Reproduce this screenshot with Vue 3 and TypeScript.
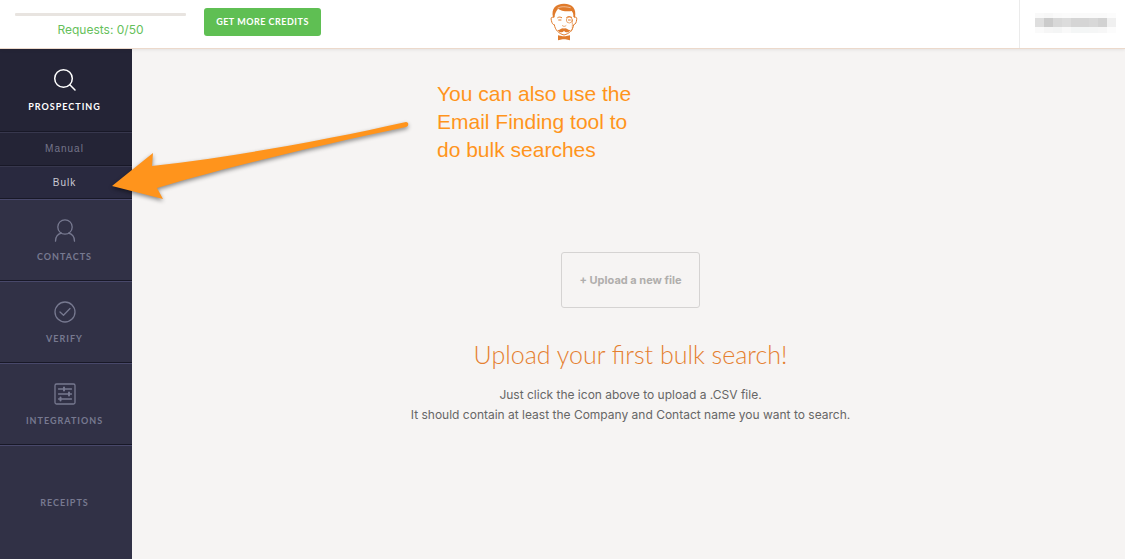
<script setup lang="ts">
interface Cell {
  x: number
  y: number
  w: number
  h: number
  fill: string
}

const shades: string[][] = [
  ['#f9f9f9', '#f7f7f7', '#fafafa', '#fbfbfb', '#fafafa', '#fafafa', '#fafafa', '#fafafa', '#fcfcfc'],
  ['#dedede', '#cbcbcb', '#d8d8d8', '#dcdcdc', '#d5d5d5', '#d5d5d5', '#d8d8d8', '#d2d2d2', '#f0f0f0'],
  ['#fafafa', '#f6f6f6', '#f4f5f5', '#f9f9f9', '#f4f6f6', '#f4f6f6', '#f5f6f6', '#f7f7f7', '#fcfcfc'],
]
const rowTops = [0, 5, 14]
const rowHeights = [5, 9, 6]
const cells: Cell[] = shades.flatMap((row, r) =>
  row.map((fill, c) => ({ x: c * 9, y: rowTops[r], w: 9, h: rowHeights[r], fill })),
)

const used = 0
const total = 50
</script>

<template>
  <div class="page">
    <header class="topbar">
      <div class="quota">
        <div class="track"><div class="fill" :style="{ width: (used / total) * 100 + '%' }"></div></div>
        <span class="quota-text">Requests: {{ used }}/{{ total }}</span>
      </div>
      <button class="credits" type="button">GET MORE CREDITS</button>
      <a class="logo" href="#" aria-label="Home">
        <svg width="28" height="38" viewBox="0 0 84 114" fill="none" stroke="#e07b2c" stroke-width="3" stroke-linecap="round" stroke-linejoin="round">
          <path d="M9 43C3 16 17 3 42 2C67 3 80 16 75 43L70 42C71 34 69 29 65 24C50 27 31 23 24 17C19 25 14 30 14 43Z" fill="#e07b2c" stroke="none" />
          <path d="M24 15C34 9 48 11 61 14" stroke="#fff" stroke-width="1.5" />
          <path d="M10 43C4 41 2 45 4 52C6 61 8 65 13 65C15 80 26 92 42 96C58 92 69 81 71 65C77 64 79 58 80 50C81 43 78 41 74 43" />
          <path d="M23 44C27 41 31 42 35 44M50 43C54 40 60 40 65 43" stroke-width="3" />
          <path d="M26 51H33M55 51H61" stroke-width="3" />
          <circle cx="58" cy="51" r="9" stroke-width="2" />
          <path d="M67 53V78C67 84 62 86 60 83" stroke-width="2" stroke-dasharray="3 3" />
          <path d="M37 68C40 71 45 71 48 68" stroke-width="2" />
          <path d="M42 77C35 73 31 83 23 81C28 91 38 89 42 83C46 89 56 91 61 81C53 83 49 73 42 77Z" fill="#e07b2c" stroke="none" />
          <path d="M24 97L38 100H46L60 97V112L46 109H38L24 112Z" fill="#e07b2c" stroke="none" />
        </svg>
      </a>
      <div class="account">
        <svg width="81" height="20" viewBox="0 0 81 20" shape-rendering="crispEdges" aria-hidden="true">
          <rect v-for="(c, i) in cells" :key="i" :x="c.x" :y="c.y" :width="c.w" :height="c.h" :fill="c.fill" />
        </svg>
      </div>
    </header>

    <div class="body">
      <nav class="sidebar">
        <a class="item current" href="#">
          <svg width="24" height="24" viewBox="0 0 24 24" fill="none" stroke="currentColor" stroke-width="1.5" stroke-linecap="round">
            <circle cx="10.5" cy="10.5" r="8.8" />
            <path d="M16.8 16.8L22 22" />
          </svg>
          <span>PROSPECTING</span>
        </a>
        <a class="sub" href="#">Manual</a>
        <a class="sub active" href="#">Bulk</a>
        <a class="item" href="#">
          <svg width="24" height="24" viewBox="0 0 24 24" fill="none" stroke="currentColor" stroke-width="1.3" stroke-linecap="round">
            <circle cx="12" cy="9" r="7.2" />
            <path d="M2.5 23.2C2.5 19.2 5 16 8.5 15.2M15.5 15.2C19 16 21.5 19.2 21.5 23.2" />
          </svg>
          <span>CONTACTS</span>
        </a>
        <a class="item" href="#">
          <svg width="24" height="24" viewBox="0 0 24 24" fill="none" stroke="currentColor" stroke-width="1.3" stroke-linecap="round" stroke-linejoin="round">
            <circle cx="12" cy="12" r="10" />
            <path d="M7 12L10.5 15.2L17 8.5" />
          </svg>
          <span>VERIFY</span>
        </a>
        <a class="item" href="#">
          <svg width="24" height="24" viewBox="0 0 24 24" fill="none" stroke="currentColor" stroke-width="1.3" stroke-linecap="round">
            <rect x="2" y="2" width="20" height="20" rx="1.5" />
            <path d="M5.5 7H18.5M5.5 12H18.5M5.5 17H18.5" />
            <path d="M11 5.5V8.5M16 10.5V13.5M7.5 15.5V18.5" stroke-width="2" />
          </svg>
          <span>INTEGRATIONS</span>
        </a>
        <a class="item last" href="#"><span>RECEIPTS</span></a>
      </nav>

      <main class="content">
        <button class="upload" type="button">+ Upload a new file</button>
        <h1>Upload your first bulk search!</h1>
        <p>
          Just click the icon above to upload a .CSV file.<br />
          It should contain at least the Company and Contact name you want to search.
        </p>
      </main>

      <svg class="arrow" width="310" height="90" viewBox="0 0 310 90" aria-hidden="true">
        <path d="M2 67L43 34L42 47C130 37 220 20 296 3C299 3 299 7 296 8C220 24 120 47 47 69L53 80Z" fill="#ff941c" />
      </svg>
      <div class="note">You can also use the<br />Email Finding tool to<br />do bulk searches</div>
    </div>
  </div>
</template>

<style>
body {
  margin: 0;
}
</style>

<style scoped>
.page {
  display: flex;
  flex-direction: column;
  min-height: 100vh;
  background: #f6f4f3;
  font-family: "Liberation Sans", sans-serif;
}
.topbar {
  display: grid;
  grid-template-columns: 1fr auto 1fr;
  grid-template-rows: 48px;
  position: relative;
  z-index: 1;
  background: #fff;
  border-bottom: 1px solid #ecd9cb;
  box-shadow: 0 1px 3px rgba(0, 0, 0, 0.08);
}
.quota {
  grid-area: 1 / 1;
  width: 171px;
  margin: 13px 0 0 15px;
  text-align: center;
}
.track {
  height: 3px;
  border-radius: 1px;
  background: #e8e4e0;
}
.fill {
  height: 100%;
  background: #5fbf53;
}
.quota-text {
  display: block;
  margin-top: 6px;
  font: 12px/16px Inter, sans-serif;
  color: #66bf5b;
}
.credits {
  grid-area: 1 / 1;
  width: 117px;
  height: 28px;
  margin: 8px 0 0 204px;
  padding: 0;
  border: 0;
  border-radius: 3px;
  background: #5fbf53;
  color: #fff;
  font: bold 9px/28px Lato, sans-serif;
  letter-spacing: 0.5px;
  white-space: nowrap;
}
.logo {
  grid-area: 1 / 2;
  height: 38px;
  margin: 3px 0 0 2px;
}
.logo svg,
.account svg {
  display: block;
}
.account {
  grid-area: 1 / 3;
  justify-self: end;
  padding: 13px 9px 0 15px;
  border-left: 1px solid #ebebeb;
}
.body {
  display: flex;
  flex: 1;
  position: relative;
}
.sidebar {
  display: flex;
  flex-direction: column;
  flex: none;
  width: 132px;
  background: #313146;
}
.sidebar a {
  box-sizing: border-box;
  border-bottom: 1px solid #181827;
  border-top: 1px solid #48486a;
  text-decoration: none;
  text-align: center;
}
.item {
  display: flex;
  flex-direction: column;
  align-items: center;
  gap: 9px;
  height: 82px;
  padding: 18px 3px 0 0;
  color: #777990;
  font: bold 9px/12px Lato, sans-serif;
  letter-spacing: 1px;
}
.sidebar .current {
  height: 83px;
  border-top-color: #242436;
  background: #242436;
  color: #fff;
}
.sidebar .last {
  flex: 1;
  padding-top: 51px;
  border-bottom: 0;
}
.sidebar .sub {
  height: 34px;
  padding-right: 3px;
  border-top-color: #37374d;
  background: #242436;
  color: #74758a;
  font-size: 10px;
  line-height: 32px;
  letter-spacing: 1px;
}
.sidebar .active {
  height: 33px;
  background: #29293f;
  color: #c9c9d3;
}
.content {
  flex: 1;
  display: flex;
  flex-direction: column;
  align-items: center;
  padding: 203px 0 0 4px;
  text-align: center;
}
.upload {
  width: 139px;
  height: 56px;
  padding: 0;
  border: 1px solid #d5d3d2;
  border-radius: 3px;
  background: transparent;
  color: #b0aeac;
  font: bold 11px/16px Inter, sans-serif;
}
h1 {
  margin: 29px 0 0;
  color: #e58030;
  font: 300 25px/34px Lato, sans-serif;
}
p {
  margin: 14px 0 0;
  color: #666;
  font: 12px/20px Inter, sans-serif;
}
.arrow {
  position: absolute;
  left: 110px;
  top: 70px;
  z-index: 2;
  filter: drop-shadow(0 2px 2px rgba(0, 0, 0, 0.45));
}
.note {
  position: absolute;
  left: 437px;
  top: 31px;
  color: #ff941c;
  font-size: 21px;
  line-height: 28px;
  white-space: nowrap;
}
</style>
